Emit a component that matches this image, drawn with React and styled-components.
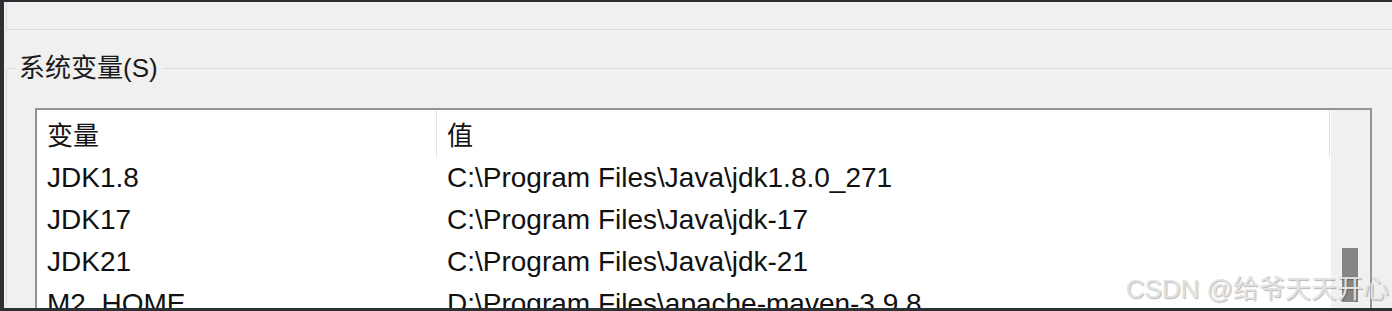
import React from 'react'
import styled, { createGlobalStyle } from 'styled-components'

const GlobalStyle = createGlobalStyle`
  html, body {
    margin: 0;
    padding: 0;
    background: #f0f0f0;
  }
  body {
    font-family: "Liberation Sans", "Noto Sans CJK SC", sans-serif;
    color: #111;
  }
`

const variables = [
    { name: 'JDK1.8', value: 'C:\\Program Files\\Java\\jdk1.8.0_271' },
    { name: 'JDK17', value: 'C:\\Program Files\\Java\\jdk-17' },
    { name: 'JDK21', value: 'C:\\Program Files\\Java\\jdk-21' },
    { name: 'M2_HOME', value: 'D:\\Program Files\\apache-maven-3.9.8' }
]

function App() {
    return (
        <Window>
            <GlobalStyle/>
            <Content>
                <TopPanel/>
                <GroupBox>
                    <GroupTitle>系统变量(S)</GroupTitle>
                    <ListBox>
                        <ListMain>
                            <HeaderRow>
                                <HeaderCell>变量</HeaderCell>
                                <HeaderCell divided>值</HeaderCell>
                            </HeaderRow>
                            {variables.map(v => (
                                <Row key={v.name}>
                                    <Cell>{v.name}</Cell>
                                    <Cell value>{v.value}</Cell>
                                </Row>
                            ))}
                        </ListMain>
                        <ScrollTrack>
                            <ScrollThumb/>
                        </ScrollTrack>
                    </ListBox>
                </GroupBox>
            </Content>
            <Watermark>CSDN @给爷天天开心</Watermark>
        </Window>
    )
}

const Window = styled.div`
  position: relative;
  box-sizing: border-box;
  width: 1392px;
  height: 311px;
  overflow: hidden;
  background: #f0f0f0;
  border-top: 2px solid #2c3035;
  border-left: 4px solid #2c3035;
  border-bottom: 3px solid #2c3035;
`

const Content = styled.div`
  padding-left: 2px;
  display: flex;
  flex-direction: column;
`

const TopPanel = styled.div`
  height: 27px;
  border-left: 1px solid #dcdcdc;
  border-bottom: 1px solid #dcdcdc;
`

const GroupBox = styled.fieldset`
  margin: 23px 0 0 0;
  padding: 0;
  min-width: 0;
  border-style: solid;
  border-color: #dcdcdc;
  border-width: 1px 0 0 1px;
`

const GroupTitle = styled.legend`
  margin-left: 8px;
  padding: 0 4px;
  font-size: 26px;
  line-height: 30px;
  color: #1a1a1a;
`

const ListBox = styled.div`
  margin: 25px 0 0 28px;
  width: 1337px;
  box-sizing: border-box;
  height: 260px;
  border: 2px solid #8f949b;
  border-bottom: none;
  background: #fff;
  display: flex;
`

const ListMain = styled.div`
  width: 1294px;
  padding-right: 1px;
`

const HeaderRow = styled.div`
  display: grid;
  grid-template-columns: 399px 1fr;
  height: 47px;
`

const HeaderCell = styled.div`
  display: flex;
  align-items: center;
  padding-left: 10px;
  font-size: 26px;
  color: #111;
  ${({ divided }) => divided && `
    border-left: 1px solid #e2e2e2;
    border-right: 1px solid #e2e2e2;
  `}
`

const Row = styled.div`
  display: grid;
  grid-template-columns: 399px 1fr;
  height: 42px;
  align-items: center;
`

const Cell = styled.div`
  padding-left: ${({ value }) => (value ? '11px' : '10px')};
  font-size: 28px;
  white-space: nowrap;
  color: #111;
`

const ScrollTrack = styled.div`
  width: 39px;
  background: #f0f0f0;
  padding: 138px 0 0 11px;
  box-sizing: border-box;
`

const ScrollThumb = styled.div`
  width: 16px;
  height: 54px;
  background: #868686;
`

const Watermark = styled.div`
  position: absolute;
  right: 3px;
  bottom: 4px;
  font-size: 26px;
  line-height: 30px;
  color: #e2e2e2;
  text-shadow: 1px 1px 1px rgba(0, 0, 0, 0.28);
  white-space: nowrap;
`

export default App
